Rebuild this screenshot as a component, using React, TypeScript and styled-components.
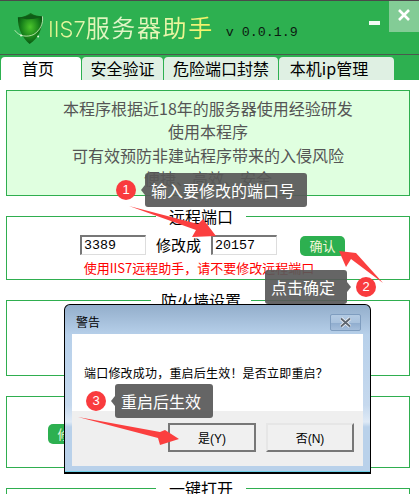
import React from 'react';
import styled, { createGlobalStyle } from 'styled-components';

const cjk = '"Noto Sans CJK SC", "Liberation Sans", sans-serif';

const GlobalStyle = createGlobalStyle`
  html, body {
    margin: 0;
    padding: 0;
    background: #fff;
    overflow: hidden;
  }
`;

const Page = styled.div`
  position: relative;
  width: 419px;
  height: 494px;
  overflow: hidden;
  font-family: ${cjk};
  color: #000;
`;

const Header = styled.header`
  display: flex;
  align-items: flex-start;
  height: 55px;
  box-sizing: border-box;
  border-top: 1px solid #4a4a4a;
  border-bottom: 1px solid #4a5a4e;
  background: #2db050;
`;

const Brand = styled.div`
  display: flex;
  align-items: center;
  padding: 10px 0 0 12px;
`;

const Title = styled.h1`
  margin: 0 0 0 4px;
  font-size: 24px;
  font-weight: 400;
  line-height: 32px;
  letter-spacing: 1.6px;
  white-space: nowrap;
  background: linear-gradient(90deg, #e6f58a 0%, #dff5cc 40%, #e8f6b0 70%, #f7f25a 100%);
  -webkit-background-clip: text;
  background-clip: text;
  color: transparent;
`;

const TitleLatin = styled.span`
  font-family: Inter, "Liberation Sans", sans-serif;
  font-size: 22px;
  font-weight: 300;
  letter-spacing: 0;
`;

const Version = styled.span`
  margin: 8px 0 0 12px;
  font-family: "Liberation Mono", monospace;
  font-size: 13.33px;
  color: #0c1a10;
  white-space: nowrap;
`;

const WindowButtons = styled.div`
  display: flex;
  margin-left: auto;
`;

const MinButton = styled.div`
  width: 11px;
  height: 4px;
  margin: 20px 9px 0 0;
  background: #f2fbf4;
`;

const CloseButton = styled.div`
  display: flex;
  align-items: center;
  justify-content: center;
  width: 30px;
  height: 31px;
  padding-bottom: 4px;
  box-sizing: border-box;
  background: #83cc96;
`;

const TabBar = styled.nav`
  display: flex;
  gap: 1px;
  height: 25px;
  padding: 2px 0 0 1px;
  box-sizing: border-box;
  background: #2db050;
`;

const Tab = styled.div<{ $width: number; $trim?: number; $active?: boolean }>`
  width: ${p => p.$width}px;
  padding-right: ${p => p.$trim ?? 0}px;
  box-sizing: border-box;
  border-radius: 4px 4px 0 0;
  background: ${p => (p.$active ? '#fff' : '#dff0e3')};
  font-size: 16px;
  line-height: 23px;
  text-align: center;
  white-space: nowrap;
`;

const Content = styled.main`
  display: flex;
  flex-direction: column;
  gap: 10px;
  padding: 10px 9px 0 6px;
`;

const Intro = styled.section`
  height: 106px;
  padding-top: 6px;
  box-sizing: border-box;
  border: 1px solid #2fae4f;
  background: #e0ffe0;
  color: #555;
  font-size: 16px;
  line-height: 23.4px;
  text-align: center;
  p {
    margin: 0;
  }
`;

const Group = styled.fieldset<{ $height: number }>`
  height: ${p => p.$height}px;
  min-width: 0;
  margin: 0;
  padding: 0;
  box-sizing: border-box;
  border: 1px solid #2fae4f;
`;

const GroupTitle = styled.legend<{ $wide?: boolean }>`
  box-sizing: border-box;
  margin-left: ${p => (p.$wide ? 144 : 149)}px;
  padding: 0 ${p => (p.$wide ? 10 : 13)}px;
  height: 21px;
  font-size: 16px;
  line-height: 21px;
`;

const PortRow = styled.div`
  display: flex;
  align-items: flex-start;
  padding: 8px 0 0 73px;
`;

const PortInput = styled.input`
  width: 66px;
  height: 20px;
  padding: 0 0 0 2px;
  box-sizing: border-box;
  border-style: solid;
  border-width: 2px 1px 1px 2px;
  border-color: #777 #ddd #ddd #777;
  outline: none;
  background: #fff;
  color: #000;
  font-family: "Liberation Mono", monospace;
  font-size: 13.33px;
`;

const PortLabel = styled.span`
  width: 65px;
  font-size: 15px;
  line-height: 20px;
  text-align: center;
`;

const GreenButton = styled.button<{ $left: number; $top: number }>`
  width: 45px;
  height: 20px;
  margin: ${p => p.$top}px 0 0 ${p => p.$left}px;
  padding: 0;
  border: none;
  border-radius: 5px;
  background: #2db050;
  color: #f3f7d8;
  font-family: ${cjk};
  font-size: 13px;
  line-height: 20px;
`;

const Warning = styled.div`
  margin-top: 3px;
  padding-right: 18px;
  color: #f00;
  font-size: 13px;
  line-height: 18px;
  text-align: center;
  white-space: nowrap;
`;

const Dialog = styled.div`
  position: absolute;
  left: 64px;
  top: 304px;
  display: flex;
  flex-direction: column;
  width: 307px;
  height: 170px;
  box-sizing: border-box;
  padding: 0 7px 6px;
  border: 1px solid #000;
  border-bottom-width: 2px;
  border-radius: 6px 6px 0 0;
  background: linear-gradient(180deg, #93aecb 0%, #b7d0ea 18%, #c6d9ee 60%, #dfeaf6 70%, #b9d1ea 73%, #b9d1ea 100%);
  box-shadow: inset 0 -1px 0 #6fd0e8;
`;

const DialogTitle = styled.div`
  display: flex;
  align-items: flex-start;
  height: 29px;
  flex: none;
  font-size: 12px;
  line-height: 34px;
  padding-left: 4px;
`;

const DialogClose = styled.div`
  display: flex;
  align-items: center;
  justify-content: center;
  width: 31px;
  height: 17px;
  margin: 9px 2px 0 auto;
  box-sizing: border-box;
  border: 1px solid #7f9dbf;
  border-radius: 2px;
  background: linear-gradient(180deg, #b4cbe3 0%, #a9c2dd 50%, #8facce 52%, #a5bedb 100%);
`;

const DialogMessage = styled.div`
  height: 77px;
  flex: none;
  box-sizing: border-box;
  padding: 30px 0 0 12px;
  background: #fff;
  font-size: 12px;
  line-height: 18px;
  letter-spacing: 0.2px;
  white-space: nowrap;
`;

const DialogFooter = styled.div`
  flex: 1;
  display: flex;
  justify-content: flex-end;
  align-items: flex-start;
  gap: 10px;
  padding: 12px 9px 0 0;
  background: #efefef;
`;

const DialogButton = styled.button<{ $active?: boolean }>`
  width: 88px;
  height: 29px;
  padding: 0;
  box-sizing: border-box;
  border-style: solid;
  border-width: 2px;
  border-color: ${p => (p.$active ? '#777' : '#e6e6e6 #777 #777 #e6e6e6')};
  background: #f0f0f0;
  color: #000;
  font-family: "Liberation Sans", "Noto Sans CJK SC", sans-serif;
  font-size: 12px;
`;

const Arrows = styled.svg`
  position: absolute;
  left: 0;
  top: 0;
`;

const Badge = styled.div<{ $x: number; $y: number }>`
  position: absolute;
  left: ${p => p.$x - 10}px;
  top: ${p => p.$y - 10}px;
  width: 20px;
  height: 20px;
  border-radius: 50%;
  background: #f93b3e;
  color: #fff;
  font-family: "Liberation Sans", sans-serif;
  font-size: 13px;
  line-height: 20px;
  text-align: center;
`;

const Tip = styled.div<{ $x: number; $y: number; $width: number; $side: 'left' | 'right' }>`
  position: absolute;
  left: ${p => p.$x}px;
  top: ${p => p.$y}px;
  width: ${p => p.$width}px;
  height: 34px;
  box-sizing: border-box;
  padding-left: 6px;
  border-radius: 3px;
  background: rgba(88, 88, 88, 0.92);
  color: #fff;
  font-size: 16px;
  line-height: 34px;
  white-space: nowrap;
  &::after {
    content: '';
    position: absolute;
    top: 12px;
    ${p => (p.$side === 'left' ? 'left: -4px;' : 'right: -4px;')}
    border-style: solid;
    border-width: 5px 0 5px 4px;
    border-color: transparent transparent transparent rgba(88, 88, 88, 0.92);
    ${p => (p.$side === 'left' ? 'transform: scaleX(-1);' : '')}
  }
`;

function ShieldLogo() {
  return (
    <svg width="32" height="32" viewBox="1 1 29 30">
      <defs>
        <radialGradient id="shield" cx="0.5" cy="0.45" r="0.6">
          <stop offset="0" stopColor="#4cc62c" />
          <stop offset="0.6" stopColor="#17811a" />
          <stop offset="1" stopColor="#064a10" />
        </radialGradient>
      </defs>
      <path d="M6 6 C11 6 15 4 18 2 C21 4 25 5 29 5 C29 17 26 25 17 31 C10 25 6 17 6 6Z" fill="url(#shield)" />
      <path d="M8 6 C12 6 15 4 18 3 C21 4 24 5 27 6 C21 8 13 9 8 6Z" fill="#0f5c17" />
      <path d="M29 5 C30 12 27 18 21 22 C15 25 7 24 3 18" fill="none" stroke="#d8f3c8" strokeWidth="0.9" opacity="0.8" />
      <circle cx="9" cy="23" r="0.9" fill="#e8f8dc" />
      <circle cx="25" cy="24" r="0.9" fill="#e8f8dc" />
    </svg>
  );
}

export default function App(): React.ReactElement {
  return (
    <Page>
      <GlobalStyle />
      <Header>
        <Brand>
          <ShieldLogo />
          <Title><TitleLatin>IIS7</TitleLatin>服务器助手</Title>
          <Version>v 0.0.1.9</Version>
        </Brand>
        <WindowButtons>
          <MinButton />
          <CloseButton>
            <svg width="12" height="12" viewBox="0 0 12 12">
              <path d="M1 1 L11 11 M11 1 L1 11" stroke="#fff" strokeWidth="2.6" />
            </svg>
          </CloseButton>
        </WindowButtons>
      </Header>
      <TabBar>
        <Tab $width={80} $trim={6} $active>首页</Tab>
        <Tab $width={81}>安全验证</Tab>
        <Tab $width={114}>危险端口封禁</Tab>
        <Tab $width={115} $trim={15}>本机ip管理</Tab>
      </TabBar>
      <Content>
        <Intro>
          <p>本程序根据近18年的服务器使用经验研发</p>
          <p>使用本程序</p>
          <p>可有效预防非建站程序带来的入侵风险</p>
          <p>便捷、高效、安全</p>
        </Intro>
        <Group $height={74}>
          <GroupTitle>远程端口</GroupTitle>
          <PortRow>
            <PortInput defaultValue="3389" />
            <PortLabel>修改成</PortLabel>
            <PortInput defaultValue="20157" />
            <GreenButton $left={23} $top={1}>确认</GreenButton>
          </PortRow>
          <Warning>使用IIS7远程助手，请不要修改远程端口</Warning>
        </Group>
        <Group $height={86}>
          <GroupTitle $wide>防火墙设置</GroupTitle>
        </Group>
        <Group $height={82}>
          <GroupTitle />
          <GreenButton $left={41} $top={17}>修改</GreenButton>
        </Group>
        <Group $height={40}>
          <GroupTitle>一键打开</GroupTitle>
        </Group>
      </Content>

      <Dialog>
        <DialogTitle>
          警告
          <DialogClose>
            <svg width="13" height="11" viewBox="0 0 13 11">
              <path d="M2 1.5 L11 9.5 M11 1.5 L2 9.5" stroke="#f4f6f8" strokeWidth="3.6" />
              <path d="M2 1.5 L11 9.5 M11 1.5 L2 9.5" stroke="#5e6670" strokeWidth="1.8" />
            </svg>
          </DialogClose>
        </DialogTitle>
        <DialogMessage>端口修改成功，重启后生效！是否立即重启？</DialogMessage>
        <DialogFooter>
          <DialogButton $active>是(Y)</DialogButton>
          <DialogButton>否(N)</DialogButton>
        </DialogFooter>
      </Dialog>

      <Arrows width="419" height="494" viewBox="0 0 419 494">
        <g fill="#fb3f3f">
          <polygon points="129,206 198,224 203,219 216,236 192,237 196,230" />
          <polygon points="383,283 356,253 339,251 346,267 351,259" />
          <polygon points="78,417 160,432 165,430 179,439 160,445 158,438" />
        </g>
      </Arrows>

      <Badge $x={126} $y={190}>1</Badge>
      <Tip $x={145} $y={173} $width={162} $side="left">输入要修改的端口号</Tip>
      <Tip $x={265} $y={270} $width={82} $side="right">点击确定</Tip>
      <Badge $x={366} $y={287}>2</Badge>
      <Badge $x={96} $y={401}>3</Badge>
      <Tip $x={115} $y={384} $width={98} $side="left">重启后生效</Tip>
    </Page>
  );
}
